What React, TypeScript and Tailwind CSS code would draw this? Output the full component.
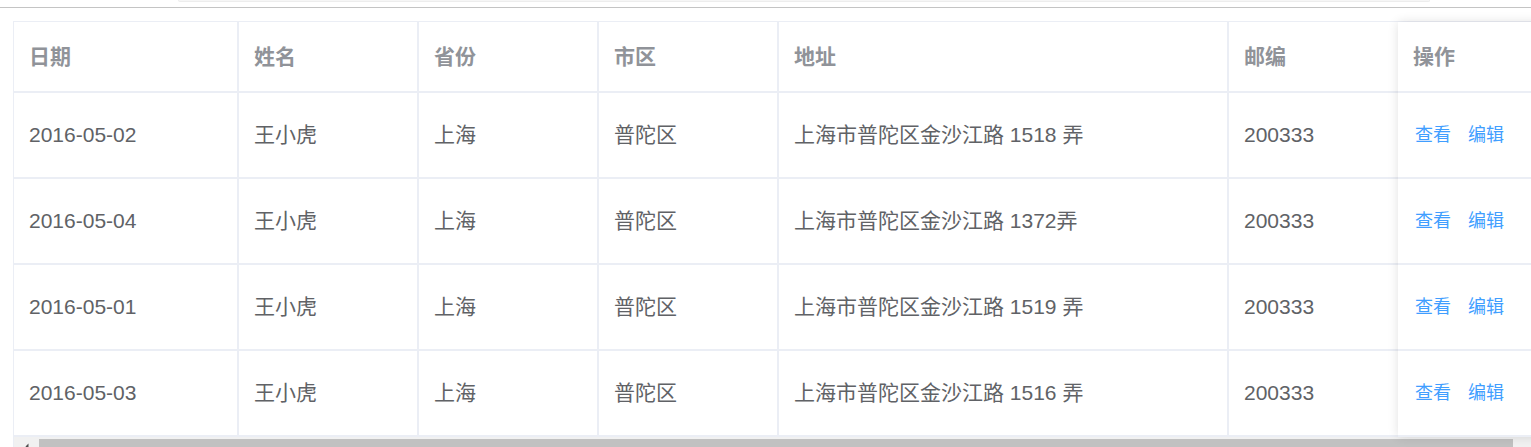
import React from 'react';

interface Row {
  date: string;
  name: string;
  province: string;
  city: string;
  address: string;
  zip: string;
}

const rows: Row[] = [
  { date: '2016-05-02', name: '王小虎', province: '上海', city: '普陀区', address: '上海市普陀区金沙江路 1518 弄', zip: '200333' },
  { date: '2016-05-04', name: '王小虎', province: '上海', city: '普陀区', address: '上海市普陀区金沙江路 1372弄', zip: '200333' },
  { date: '2016-05-01', name: '王小虎', province: '上海', city: '普陀区', address: '上海市普陀区金沙江路 1519 弄', zip: '200333' },
  { date: '2016-05-03', name: '王小虎', province: '上海', city: '普陀区', address: '上海市普陀区金沙江路 1516 弄', zip: '200333' },
];

const columns: Array<{ key: keyof Row; label: string; width: string }> = [
  { key: 'date', label: '日期', width: 'w-[225px]' },
  { key: 'name', label: '姓名', width: 'w-[180px]' },
  { key: 'province', label: '省份', width: 'w-[180px]' },
  { key: 'city', label: '市区', width: 'w-[180px]' },
  { key: 'address', label: '地址', width: 'w-[450px]' },
  { key: 'zip', label: '邮编', width: 'w-[180px]' },
];

export default function App() {
  return (
    <div
      className="w-[1531px] h-[447px] overflow-hidden bg-white"
      style={{ fontFamily: '"Liberation Sans", "Noto Sans CJK SC", sans-serif' }}
    >
      {/* top strip */}
      <div className="h-[7px]">
        <div className="ml-[178px] w-[1252px] h-[2px] bg-[#f6f6f6] border-b border-x border-[#ededed] rounded-b-[4px]" />
      </div>
      <div className="h-px bg-[#c4c4c4]" />

      {/* table */}
      <div className="mt-[13px] ml-[13px] w-[1540px] border-l border-t border-[#ebeef5]">
        <div className="flex">
          {/* scrolling body */}
          <div className="w-[1384px] shrink-0 overflow-hidden">
            <div className="flex h-[71px] border-b-2 border-[#ebeef5] w-max">
              {columns.map((c) => (
                <div
                  key={c.key}
                  className={`${c.width} shrink-0 border-r-2 border-[#ebeef5] pl-[15px] flex items-center text-[21px] font-bold text-[#909399]`}
                >
                  {c.label}
                </div>
              ))}
            </div>
            {rows.map((r, i) => (
              <div key={i} className="flex h-[86px] border-b-2 border-[#ebeef5] w-max">
                {columns.map((c) => (
                  <div
                    key={c.key}
                    className={`${c.width} shrink-0 border-r-2 border-[#ebeef5] pl-[15px] flex items-center text-[21px] text-[#606266] whitespace-nowrap`}
                  >
                    {r[c.key]}
                  </div>
                ))}
              </div>
            ))}
          </div>

          {/* fixed right column */}
          <div className="w-[150px] shrink-0 bg-white shadow-[0_0_10px_rgba(0,0,0,0.12)] relative">
            <div className="h-[71px] border-b-2 border-[#ebeef5] pl-[15px] flex items-center text-[21px] font-bold text-[#909399]">
              操作
            </div>
            {rows.map((_, i) => (
              <div
                key={i}
                className="h-[86px] border-b-2 border-[#ebeef5] pl-[17px] flex items-center gap-[17px] text-[18px] text-[#409eff]"
              >
                <span>查看</span>
                <span>编辑</span>
              </div>
            ))}
          </div>
        </div>

        {/* horizontal scrollbar */}
        <div className="h-[15px] bg-[#f1f1f1] flex items-start">
          <div className="w-[25px] h-full flex justify-center pt-[8px]">
            <div className="w-0 h-0 border-x-[3px] border-x-transparent border-b-[3px] border-b-[#505050] -rotate-90" />
          </div>
          <div className="mt-[2px] w-[1474px] h-[11px] bg-[#c1c1c1]" />
        </div>
      </div>
    </div>
  );
}
